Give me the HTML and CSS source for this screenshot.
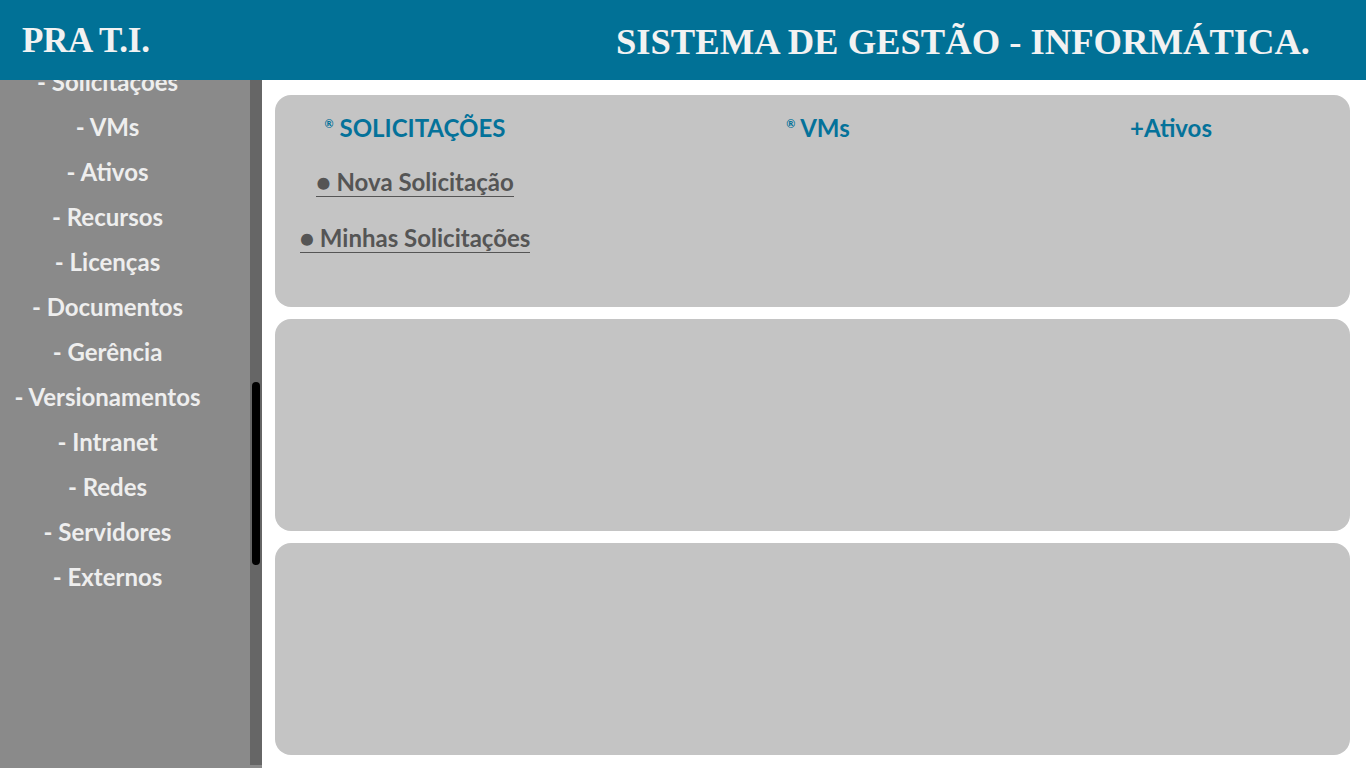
FILE: index.html
```html
<!DOCTYPE html>
<html lang="pt-BR">
<head>
<meta charset="utf-8">
<title>PRA T.I. - Sistema de Gestão</title>
<link rel="stylesheet" href="styles.css">
</head>
<body>
<header class="topbar">
  <div class="brand">PRA T.I.</div>
  <div class="title">SISTEMA DE GESTÃO - INFORMÁTICA.</div>
</header>
<div class="layout">
  <aside class="sidebar">
    <div class="sidebar-scroll">
      <ul class="menu">
        <li>- Solicitações</li>
        <li>- VMs</li>
        <li>- Ativos</li>
        <li>- Recursos</li>
        <li>- Licenças</li>
        <li>- Documentos</li>
        <li>- Gerência</li>
        <li>- Versionamentos</li>
        <li>- Intranet</li>
        <li>- Redes</li>
        <li>- Servidores</li>
        <li>- Externos</li>
      </ul>
    </div>
    <div class="scrolltrack"><div class="thumb"></div></div>
  </aside>
  <main class="content">
    <section class="card card-menu">
      <div class="col col-1">
        <div class="col-title"><span class="reg">®</span> SOLICITAÇÕES</div>
        <a class="sub sub-1">● Nova Solicitação</a>
        <a class="sub sub-2">● Minhas Solicitações</a>
      </div>
      <div class="col col-2">
        <div class="col-title"><span class="reg">®</span> VMs</div>
      </div>
      <div class="col col-3">
        <div class="col-title">+Ativos</div>
      </div>
    </section>
    <section class="card"></section>
    <section class="card"></section>
  </main>
</div>
</body>
</html>
```
FILE: styles.css
```css
* { box-sizing: border-box; }
html, body { margin: 0; padding: 0; }
body {
  width: 1366px;
  height: 768px;
  overflow: hidden;
  background: #ffffff;
  font-family: Lato, "Open Sans", sans-serif;
}
.topbar {
  height: 80px;
  background: #017196;
  display: flex;
  align-items: center;
  justify-content: space-between;
  padding: 0 56px 0 22px;
  color: #f2f2f2;
  font-family: "Liberation Serif", "DejaVu Serif", serif;
  font-weight: bold;
}
.brand { font-size: 35px; letter-spacing: -0.3px; padding-top: 1px; }
.title { font-size: 36.6px; padding-top: 2px; }
.layout {
  display: flex;
  height: 688px;
}
.sidebar {
  width: 262px;
  background: #8a8a8a;
  display: flex;
  height: 688px;
  overflow: hidden;
}
.sidebar-scroll {
  width: 250px;
  overflow: hidden;
}
.menu {
  list-style: none;
  margin: -21px 0 0 0;
  padding: 0 35px 0 0;
}
.menu li {
  height: 45px;
  line-height: 45px;
  text-align: center;
  color: #eeeeee;
  font-weight: bold;
  font-size: 24px;
  white-space: nowrap;
}
.scrolltrack {
  width: 12px;
  height: 685px;
  background: #666666;
  padding: 302px 2px 0 2px;
}
.thumb {
  width: 8px;
  height: 183px;
  background: #000;
  border-radius: 4px;
}
.content {
  flex: 1;
  padding: 15px 16px 0 13px;
  display: flex;
  flex-direction: column;
  gap: 12px;
}
.card {
  height: 212px;
  background: #c4c4c4;
  border-radius: 16px;
}
.card-menu {
  display: grid;
  grid-template-columns: 280px 526px 180px;
  align-items: start;
}
.col {
  display: flex;
  flex-direction: column;
  align-items: center;
  padding-top: 18px;
}
.col-title {
  color: #04729a;
  font-weight: bold;
  font-size: 24px;
  line-height: 30px;
  height: 30px;
  white-space: nowrap;
}
.reg {
  font-size: 11px;
  line-height: 0;
  vertical-align: 9px;
}
.sub {
  color: #555555;
  font-weight: bold;
  font-size: 24px;
  line-height: 26px;
  border-bottom: 1.5px solid #555;
  padding-bottom: 1px;
  margin-top: 26px;
  white-space: nowrap;
}
.sub-2 { margin-top: 28px; }
```
